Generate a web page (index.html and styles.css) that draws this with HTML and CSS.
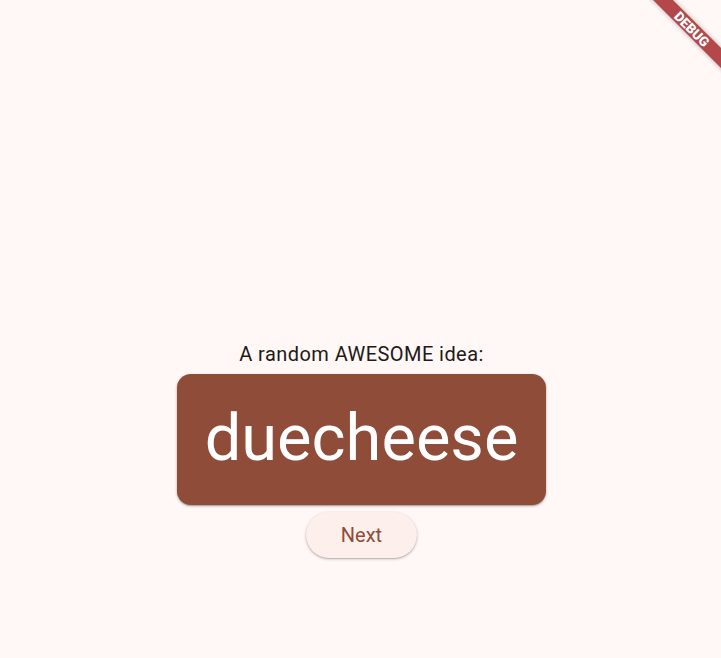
FILE: index.html
```html
<!DOCTYPE html>
<html lang="en">
<head>
<meta charset="utf-8">
<title>Namer App</title>
<link rel="stylesheet" href="styles.css">
</head>
<body>
<main class="page">
  <p class="label">A random AWESOME idea:</p>
  <div class="card"><span class="word">duecheese</span></div>
  <button class="next">Next</button>
</main>
<div class="banner-wrap"><div class="banner">DEBUG</div></div>
</body>
</html>
```
FILE: styles.css
```css
html, body {
  margin: 0;
  padding: 0;
  background: #fff8f6;
  font-family: Roboto, "Noto Sans", sans-serif;
}
body {
  width: 721px;
  height: 658px;
  overflow: hidden;
  position: relative;
}
.page {
  display: flex;
  flex-direction: column;
  align-items: center;
  padding-top: 342px;
  padding-left: 2px;
}
.label {
  margin: 0;
  font-size: 20px;
  line-height: 24px;
  color: #231917;
  letter-spacing: 0.44px;
}
.card {
  margin-top: 8px;
  background: #8f4c38;
  border-radius: 14px;
  box-shadow: 0 1px 3px rgba(0,0,0,0.3), 0 1px 1px rgba(0,0,0,0.15);
  padding: 27px 28px 29px;
}
.word {
  display: block;
  color: #ffffff;
  font-size: 65px;
  line-height: 75px;
}
.next {
  margin-top: 7px;
  width: 111px;
  height: 46px;
  border: none;
  border-radius: 23px;
  background: #fdefeb;
  color: #8f4c38;
  font-family: Roboto, "Noto Sans", sans-serif;
  font-size: 20px;
  font-weight: 400;
  box-shadow: 0 1px 3px rgba(0,0,0,0.25), 0 1px 1px rgba(0,0,0,0.1);
  padding: 0;
}
.banner-wrap {
  position: absolute;
  top: 0;
  right: 0;
  width: 80px;
  height: 80px;
  overflow: hidden;
}
.banner {
  position: absolute;
  left: -19px;
  top: 22px;
  width: 140px;
  height: 14px;
  line-height: 14px;
  transform: rotate(45deg);
  background: #b3474a;
  color: #ffffff;
  font-family: Roboto, "Noto Sans", sans-serif;
  font-size: 13.5px;
  font-weight: 900;
  text-align: center;
  box-shadow: 0 0 5px rgba(0,0,0,0.3);
}
```
